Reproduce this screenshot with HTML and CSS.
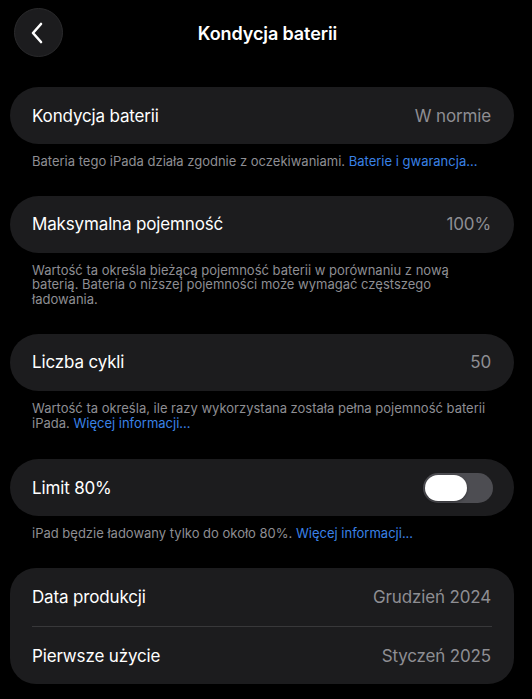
FILE: index.html
```html
<!DOCTYPE html>
<html lang="pl">
<head>
<meta charset="utf-8">
<title>Kondycja baterii</title>
<link rel="stylesheet" href="styles.css">
</head>
<body>
<header class="topbar">
  <div class="back-wrap">
    <button class="back" aria-label="Wstecz">
      <svg width="14" height="22" viewBox="0 0 14 22"><path d="M11 2 L3 11 L11 20" fill="none" stroke="#fff" stroke-width="2.6" stroke-linecap="round" stroke-linejoin="round"/></svg>
    </button>
  </div>
  <h1 class="title">Kondycja baterii</h1>
  <div></div>
</header>
<main class="content">
  <section class="group">
    <div class="card">
      <div class="row"><span class="label">Kondycja baterii</span><span class="value">W normie</span></div>
    </div>
    <p class="note">Bateria tego iPada działa zgodnie z oczekiwaniami. <a class="link">Baterie i gwarancja...</a></p>
  </section>
  <section class="group">
    <div class="card">
      <div class="row"><span class="label">Maksymalna pojemność</span><span class="value">100%</span></div>
    </div>
    <p class="note">Wartość ta określa bieżącą pojemność baterii w porównaniu z nową<br>baterią. Bateria o niższej pojemności może wymagać częstszego<br>ładowania.</p>
  </section>
  <section class="group group-wide">
    <div class="card">
      <div class="row"><span class="label">Liczba cykli</span><span class="value">50</span></div>
    </div>
    <p class="note">Wartość ta określa, ile razy wykorzystana została pełna pojemność baterii<br>iPada. <a class="link">Więcej informacji...</a></p>
  </section>
  <section class="group group-mid">
    <div class="card">
      <div class="row"><span class="label">Limit 80%</span><span class="toggle"><span class="knob"></span></span></div>
    </div>
    <p class="note">iPad będzie ładowany tylko do około 80%. <a class="link">Więcej informacji...</a></p>
  </section>
  <section class="group">
    <div class="card card-list">
      <div class="row"><span class="label">Data produkcji</span><span class="value">Grudzień 2024</span></div>
      <div class="sep"></div>
      <div class="row"><span class="label">Pierwsze użycie</span><span class="value">Styczeń 2025</span></div>
    </div>
  </section>
</main>
</body>
</html>
```

FILE: styles.css
```css
* { box-sizing: border-box; }
html, body { margin: 0; padding: 0; background: #000; }
body {
  width: 532px;
  height: 699px;
  overflow: hidden;
  font-family: Inter, "Noto Sans", "Liberation Sans", sans-serif;
  color: #fff;
}
.topbar {
  height: 66px;
  display: grid;
  grid-template-columns: 1fr auto 1fr;
  align-items: center;
}
.back-wrap { padding-left: 14px; display: flex; }
.back {
  width: 49px;
  height: 49px;
  border-radius: 50%;
  background: #1c1c1e;
  border: 1px solid #2a2a2c;
  display: flex;
  align-items: center;
  justify-content: center;
  padding: 0 3px 0 0;
  margin-top: -1px;
}
.title {
  margin: 0;
  font-size: 18px;
  font-weight: 600;
  letter-spacing: -0.1px;
  padding-left: 3px;
}
.content {
  padding: 21px 18px 0 10px;
}
.group { margin-bottom: 27px; }
.group-wide { margin-bottom: 29px; }
.group-mid { margin-bottom: 27.5px; }
.card {
  background: #1c1c1e;
  border-radius: 29px;
}
.card-list { border-radius: 26px; }
.row {
  height: 57px;
  display: flex;
  align-items: center;
  justify-content: space-between;
  padding: 0 23px 0 22px;
}
.card-list .row { height: 57.5px; }
.label {
  font-size: 17px;
  color: #fff;
  letter-spacing: -0.15px;
}
.value {
  font-size: 17px;
  color: #8e8e93;
  letter-spacing: -0.15px;
}
.sep {
  height: 1px;
  background: #38383a;
  margin: 0 22px;
}
.note {
  margin: 10px 0 0;
  padding: 0 10px 0 22px;
  font-size: 13px;
  line-height: 14.7px;
  color: #8e8e93;
  white-space: nowrap;
}
.link { color: #3a82e6; }
.toggle {
  width: 70px;
  height: 30px;
  border-radius: 15px;
  background: #4d4d52;
  display: flex;
  align-items: center;
  padding-left: 2px;
  margin-right: -2px;
}
.knob {
  width: 42px;
  height: 26px;
  border-radius: 13px;
  background: #fff;
  box-shadow: 0 1px 3px rgba(0,0,0,0.35);
}
```
